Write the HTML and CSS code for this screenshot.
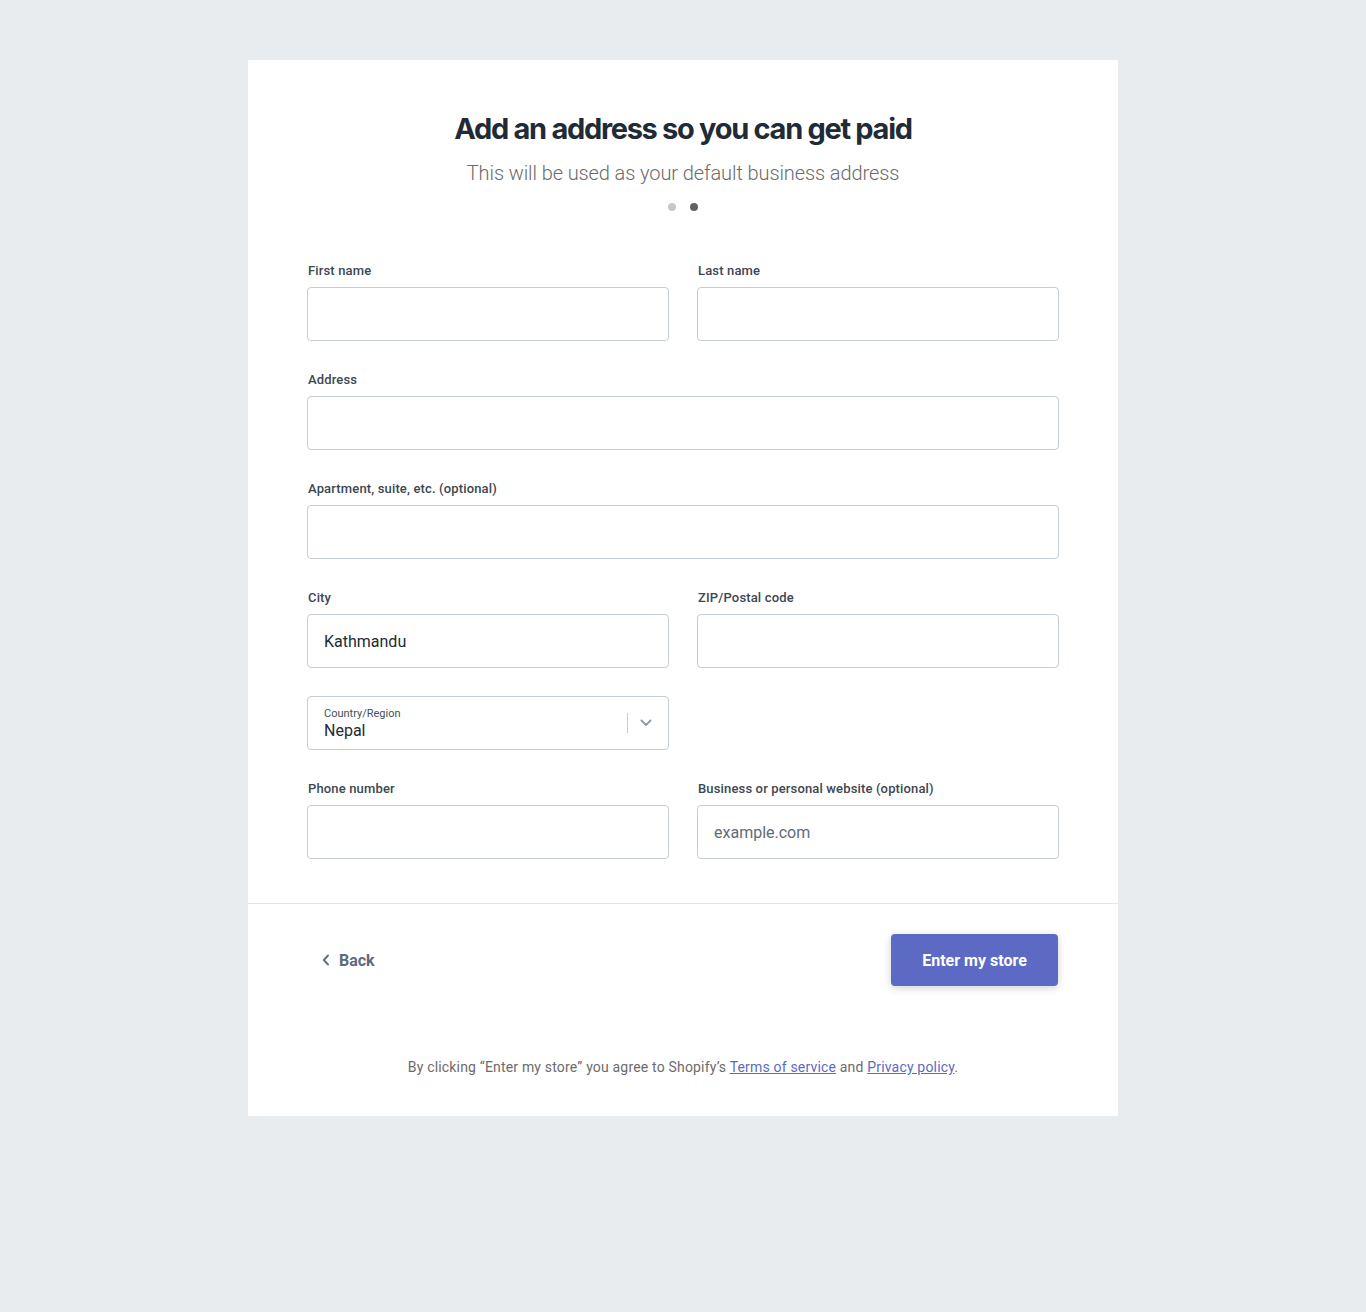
FILE: index.html
```html
<!DOCTYPE html>
<html lang="en">
<head>
<meta charset="utf-8">
<title>Add an address</title>
<link rel="stylesheet" href="styles.css">
</head>
<body>
<main class="card">
  <header class="head">
    <h1 class="title">Add an address so you can get paid</h1>
    <p class="subtitle">This will be used as your default business address</p>
    <div class="dots"><span class="dot"></span><span class="dot dot-active"></span></div>
  </header>
  <form class="form">
    <div class="row">
      <div class="field"><label class="label">First name</label><div class="input"></div></div>
      <div class="field"><label class="label">Last name</label><div class="input"></div></div>
    </div>
    <div class="field"><label class="label">Address</label><div class="input"></div></div>
    <div class="field"><label class="label">Apartment, suite, etc. (optional)</label><div class="input"></div></div>
    <div class="row">
      <div class="field"><label class="label">City</label><div class="input"><span class="value">Kathmandu</span></div></div>
      <div class="field"><label class="label">ZIP/Postal code</label><div class="input"></div></div>
    </div>
    <div class="row">
      <div class="select">
        <div class="select-text">
          <span class="select-label">Country/Region</span>
          <span class="select-value">Nepal</span>
        </div>
        <span class="select-sep"></span>
        <svg class="chev" width="12" height="8" viewBox="0 0 12 8"><path d="M1.5 1.5 6 6l4.5-4.5" fill="none" stroke="#919eab" stroke-width="2" stroke-linecap="round" stroke-linejoin="round"/></svg>
      </div>
      <div></div>
    </div>
    <div class="row">
      <div class="field"><label class="label">Phone number</label><div class="input"></div></div>
      <div class="field"><label class="label">Business or personal website (optional)</label><div class="input"><span class="placeholder">example.com</span></div></div>
    </div>
  </form>
  <div class="actions">
    <a class="back" href="#"><svg width="8" height="12" viewBox="0 0 8 12"><path d="M6 1.5 1.8 6 6 10.5" fill="none" stroke="#637381" stroke-width="2" stroke-linecap="round" stroke-linejoin="round"/></svg><span>Back</span></a>
    <button class="primary" type="button">Enter my store</button>
  </div>
  <p class="legal">By clicking “Enter my store” you agree to Shopify’s <a href="#">Terms of service</a> and <a href="#">Privacy policy</a>.</p>
</main>
</body>
</html>
```
FILE: styles.css
```css
* { box-sizing: border-box; }
html, body { margin: 0; padding: 0; }
body {
  background: #e9ecef;
  font-family: Roboto, "Liberation Sans", Arial, sans-serif;
  color: #212b36;
  padding-top: 60px;
  min-height: 1312px;
}
.card {
  width: 870px;
  margin: 0 auto;
  background: #fff;
  padding-top: 51px;
  padding-bottom: 39px;
}
.head { text-align: center; }
.title {
  margin: 0;
  font-family: Inter, Roboto, sans-serif;
  font-size: 29px;
  line-height: 36px;
  font-weight: 700;
  letter-spacing: -1.3px;
  color: #212b36;
}
.subtitle {
  margin: 12px 0 0;
  font-size: 20px;
  line-height: 28px;
  font-weight: 300;
  letter-spacing: -0.1px;
  color: #6b6b6b;
}
.dots {
  display: flex;
  justify-content: center;
  gap: 14px;
  margin-top: 16px;
  height: 8px;
}
.dot { width: 8px; height: 8px; border-radius: 50%; background: #c4c8cc; }
.dot-active { background: #616161; }
.form {
  padding: 49px 59px 44px;
  display: flex;
  flex-direction: column;
  gap: 28px;
}
.row {
  display: grid;
  grid-template-columns: 362px 362px;
  gap: 28px;
}
.field { display: flex; flex-direction: column; }
.label {
  font-size: 13px;
  line-height: 19px;
  padding-top: 1px;
  font-weight: 500;
  letter-spacing: 0.15px;
  padding-left: 1px;
  color: #3d4651;
  margin-bottom: 7px;
}
.input {
  height: 54px;
  border: 1px solid #c4cdd5;
  border-radius: 4px;
  display: flex;
  align-items: center;
  padding: 0 16px;
  font-size: 16px;
}
.value { color: #212b36; }
.placeholder { color: #5f6b78; }
.select {
  height: 54px;
  border: 1px solid #c4cdd5;
  border-radius: 4px;
  display: flex;
  align-items: center;
  padding: 0 16px 0 16px;
}
.select-text { flex: 1; display: flex; flex-direction: column; padding-top: 3px; }
.select-label { font-size: 11px; line-height: 13px; color: #454f5b; }
.select-value { font-size: 16px; line-height: 22px; color: #212b36; }
.select-sep { width: 1px; height: 20px; background: #c4cdd5; margin-right: 12px; }
.chev { display: block; }
.actions {
  border-top: 1px solid #e3e6e9;
  padding: 30px 60px 0;
  display: flex;
  justify-content: space-between;
  align-items: center;
}
.back {
  display: flex;
  align-items: center;
  gap: 9px;
  padding-left: 14px;
  text-decoration: none;
  font-size: 16px;
  font-weight: 700;
  color: #5b6b7b;
}
.primary {
  width: 167px;
  height: 52px;
  border: 0;
  border-radius: 4px;
  background: #5c6ac4;
  color: #fff;
  font-family: inherit;
  font-size: 16px;
  font-weight: 700;
  box-shadow: 0 2px 8px rgba(0,0,0,0.18);
}
.legal {
  margin: 71px 0 0;
  text-align: center;
  font-size: 14px;
  line-height: 20px;
  letter-spacing: 0.18px;
  color: #6b6b6b;
}
.legal a { color: #5c6ac4; text-decoration: underline; }
```
